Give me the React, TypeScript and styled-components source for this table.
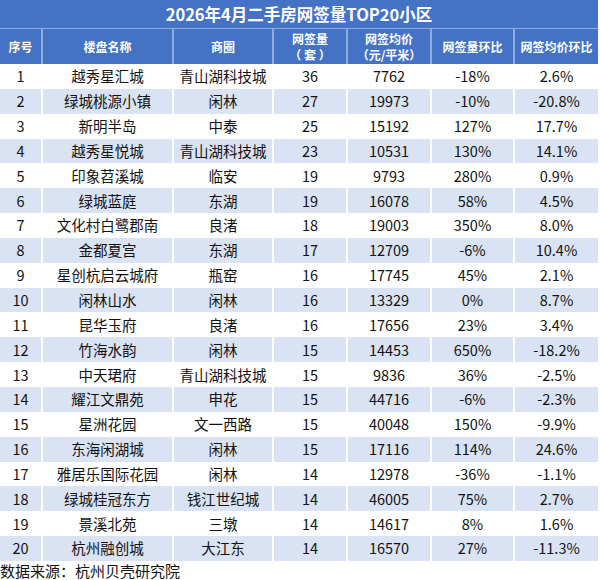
import React from "react";
import styled, { createGlobalStyle } from "styled-components";

const GlobalStyle = createGlobalStyle`
  html, body { margin: 0; padding: 0; background: #ffffff; }
  body { font-family: "Noto Sans CJK SC", "Noto Sans", sans-serif; color: #111; }
`;

const COLS = "41px 129px 98px 72px 82px 81px 83px";

const Page = styled.div`
  width: 598px;
  display: flex;
  flex-direction: column;
`;

const Title = styled.div`
  height: 28px;
  background: #4472c4;
  color: #ffffff;
  font-weight: 700;
  font-size: 16.5px;
  display: flex;
  align-items: center;
  justify-content: center;
  border-bottom: 1px solid #8faadc;
`;

const Row = styled.div<{ $variant: "head" | "odd" | "even" }>`
  display: grid;
  grid-template-columns: ${COLS};
  column-gap: 2px;
  height: ${(p) => (p.$variant === "head" ? "35px" : "24.85px")};
  background: ${(p) => (p.$variant === "head" ? "#8faadc" : "#ffffff")};
`;

const Cell = styled.div<{ $variant: "head" | "odd" | "even" }>`
  display: flex;
  flex-direction: column;
  align-items: center;
  justify-content: center;
  text-align: center;
  white-space: nowrap;
  background: ${(p) =>
    p.$variant === "head" ? "#4472c4" : p.$variant === "even" ? "#dae3f3" : "#ffffff"};
  color: ${(p) => (p.$variant === "head" ? "#ffffff" : "#111111")};
  font-weight: ${(p) => (p.$variant === "head" ? 700 : 400)};
  font-size: ${(p) => (p.$variant === "head" ? "12px" : "14.5px")};
  line-height: ${(p) => (p.$variant === "head" ? "16px" : "18px")};
`;

const Line = styled.span`
  display: block;
  line-height: 16px;
`;

const Footer = styled.div`
  font-size: 15px;
  line-height: 19px;
  color: #111;
`;

const headers = [
  "序号",
  "楼盘名称",
  "商圈",
  "网签量\n（ 套 ）",
  "网签均价\n（元/平米）",
  "网签量环比",
  "网签均价环比",
];

const rows: string[][] = [
  ["1", "越秀星汇城", "青山湖科技城", "36", "7762", "-18%", "2.6%"],
  ["2", "绿城桃源小镇", "闲林", "27", "19973", "-10%", "-20.8%"],
  ["3", "新明半岛", "中泰", "25", "15192", "127%", "17.7%"],
  ["4", "越秀星悦城", "青山湖科技城", "23", "10531", "130%", "14.1%"],
  ["5", "印象苕溪城", "临安", "19", "9793", "280%", "0.9%"],
  ["6", "绿城蓝庭", "东湖", "19", "16078", "58%", "4.5%"],
  ["7", "文化村白鹭郡南", "良渚", "18", "19003", "350%", "8.0%"],
  ["8", "金都夏宫", "东湖", "17", "12709", "-6%", "10.4%"],
  ["9", "星创杭启云城府", "瓶窑", "16", "17745", "45%", "2.1%"],
  ["10", "闲林山水", "闲林", "16", "13329", "0%", "8.7%"],
  ["11", "昆华玉府", "良渚", "16", "17656", "23%", "3.4%"],
  ["12", "竹海水韵", "闲林", "15", "14453", "650%", "-18.2%"],
  ["13", "中天珺府", "青山湖科技城", "15", "9836", "36%", "-2.5%"],
  ["14", "耀江文鼎苑", "申花", "15", "44716", "-6%", "-2.3%"],
  ["15", "星洲花园", "文一西路", "15", "40048", "150%", "-9.9%"],
  ["16", "东海闲湖城", "闲林", "15", "17116", "114%", "24.6%"],
  ["17", "雅居乐国际花园", "闲林", "14", "12978", "-36%", "-1.1%"],
  ["18", "绿城桂冠东方", "钱江世纪城", "14", "46005", "75%", "2.7%"],
  ["19", "景溪北苑", "三墩", "14", "14617", "8%", "1.6%"],
  ["20", "杭州融创城", "大江东", "14", "16570", "27%", "-11.3%"],
];

export default function App() {
  return (
    <>
      <GlobalStyle />
      <Page>
        <Title>2026年4月二手房网签量TOP20小区</Title>
        <Row $variant="head">
          {headers.map((h) => (
            <Cell key={h} $variant="head">
              {h.split("\n").map((part) => (
                <Line key={part}>{part}</Line>
              ))}
            </Cell>
          ))}
        </Row>
        {rows.map((r, i) => {
          const v = i % 2 === 0 ? "odd" : "even";
          return (
            <Row key={r[0]} $variant={v}>
              {r.map((c, j) => (
                <Cell key={j} $variant={v}>
                  {c}
                </Cell>
              ))}
            </Row>
          );
        })}
        <Footer>数据来源：杭州贝壳研究院</Footer>
      </Page>
    </>
  );
}
